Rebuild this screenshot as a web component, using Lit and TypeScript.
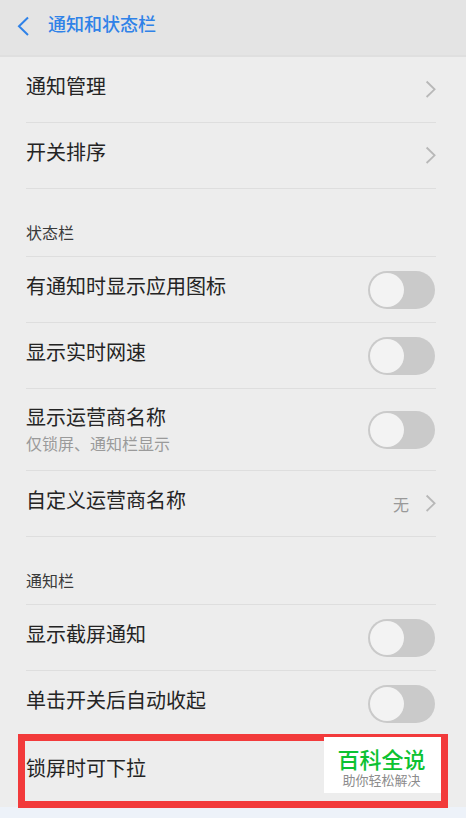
import { LitElement, html, css } from "lit";
import { customElement, property } from "lit/decorators.js";

@customElement("chevron-icon")
class ChevronIcon extends LitElement {
  static styles = css`
    :host {
      display: block;
      width: 12px;
      height: 20px;
    }
    .icon {
      display: block;
      fill: none;
      stroke: #b8b8b8;
      stroke-width: 1.8;
    }
  `;
  render() {
    return html`<svg class="icon" width="12" height="20" viewBox="0 0 12 20" aria-hidden="true">
      <path d="M2.6 1.5 10.6 9.3 2.6 17" />
    </svg>`;
  }
}

@customElement("link-row")
class LinkRow extends LitElement {
  @property() label = "";
  @property() value = "";

  static styles = css`
    :host {
      display: block;
    }
    .row {
      box-sizing: border-box;
      display: flex;
      align-items: center;
      min-height: 66px;
      border-bottom: 1px solid #dedede;
      color: #242424;
      text-decoration: none;
    }
    .label {
      flex: 1;
      padding-bottom: 8px;
      font-size: 20px;
      line-height: 28px;
    }
    .value {
      margin-right: 15px;
      font-size: 16px;
      line-height: 20px;
      color: #999;
    }
  `;
  render() {
    return html`<a class="row" href="#">
      <span class="label">${this.label}</span>
      ${this.value ? html`<span class="value">${this.value}</span>` : ""}
      <chevron-icon></chevron-icon>
    </a>`;
  }
}

@customElement("switch-row")
class SwitchRow extends LitElement {
  @property() label = "";
  @property() note = "";

  static styles = css`
    :host {
      display: block;
    }
    .row {
      box-sizing: border-box;
      display: flex;
      align-items: center;
      min-height: 66px;
      border-bottom: 1px solid #dedede;
      color: #242424;
    }
    .tall {
      min-height: 82px;
    }
    .text {
      flex: 1;
      padding-bottom: 8px;
      font-size: 20px;
      line-height: 28px;
    }
    .tall .text {
      padding-bottom: 2px;
    }
    .note {
      display: block;
      font-size: 16px;
      line-height: 24px;
      color: #9a9a9a;
    }
    .switch {
      appearance: none;
      box-sizing: border-box;
      display: flex;
      flex: none;
      width: 67px;
      height: 38px;
      margin: 0 1px 0 0;
      padding: 2px;
      border-radius: 19px;
      background: #cacaca;
    }
    .switch::before {
      content: "";
      width: 34px;
      height: 34px;
      border-radius: 50%;
      background: #f3f3f3;
    }
    .switch:checked {
      justify-content: flex-end;
      background: #1f7eea;
    }
  `;
  render() {
    return html`<label class="row ${this.note ? "tall" : ""}">
      <span class="text">
        ${this.label}${this.note ? html`<span class="note">${this.note}</span>` : ""}
      </span>
      <input class="switch" type="checkbox" role="switch" />
    </label>`;
  }
}

@customElement("app-root")
class AppRoot extends LitElement {
  static styles = css`
    :host {
      display: block;
      min-height: 100vh;
      background: #edf2f9;
      font-family: "Noto Sans CJK SC", sans-serif;
    }
    .screen {
      background: #ededed;
    }
    .header {
      box-sizing: border-box;
      display: flex;
      align-items: flex-start;
      gap: 16px;
      height: 57px;
      padding: 10px 16px 0;
      border-bottom: 2px solid #dfdfdf;
      background: #e4e4e4;
    }
    .back {
      margin: 6px 0 0;
      padding: 0;
      border: 0;
      background: none;
      cursor: pointer;
    }
    .back-icon {
      display: block;
      fill: none;
      stroke: #2f82e8;
      stroke-width: 2;
    }
    .title {
      margin: 0;
      font-size: 18px;
      font-weight: 500;
      line-height: 26px;
      color: #2f82e8;
    }
    .list {
      padding: 0 30px 0 26px;
    }
    .section {
      box-sizing: border-box;
      display: flex;
      align-items: flex-end;
      height: 68px;
      margin: 0;
      padding-bottom: 12px;
      border-bottom: 1px solid #dedede;
      font-size: 16px;
      font-weight: 400;
      line-height: 24px;
      color: #3a3a3a;
    }
    .last {
      position: relative;
      display: flex;
      align-items: center;
      height: 70px;
    }
    .last-label {
      padding-bottom: 8px;
      font-size: 20px;
      line-height: 28px;
      color: #242424;
    }
    .frame {
      position: absolute;
      inset: -3px -12px -1px -8px;
      border: 7px solid #f23a3b;
      pointer-events: none;
    }
    .badge {
      position: absolute;
      top: 0;
      right: -5px;
      box-sizing: border-box;
      width: 117px;
      height: 56px;
      padding: 8px 2px 0 0;
      background: #fff;
      text-align: center;
    }
    .badge-name {
      display: block;
      font-size: 22px;
      font-weight: 500;
      line-height: 26px;
      color: #0cc232;
    }
    .badge-note {
      display: block;
      font-size: 13px;
      line-height: 18px;
      color: #8c8c8c;
    }
  `;
  render() {
    return html`<div class="screen">
      <header class="header">
        <button class="back" aria-label="返回">
          <svg class="back-icon" width="16" height="20" viewBox="0 0 16 20">
            <path d="M12 1.5 3 10.3 12 19" />
          </svg>
        </button>
        <h1 class="title">通知和状态栏</h1>
      </header>
      <main class="list">
        <link-row label="通知管理"></link-row>
        <link-row label="开关排序"></link-row>
        <h2 class="section">状态栏</h2>
        <switch-row label="有通知时显示应用图标"></switch-row>
        <switch-row label="显示实时网速"></switch-row>
        <switch-row label="显示运营商名称" note="仅锁屏、通知栏显示"></switch-row>
        <link-row label="自定义运营商名称" value="无"></link-row>
        <h2 class="section">通知栏</h2>
        <switch-row label="显示截屏通知"></switch-row>
        <switch-row label="单击开关后自动收起"></switch-row>
        <div class="last">
          <span class="last-label">锁屏时可下拉</span>
          <div class="frame"></div>
          <div class="badge">
            <span class="badge-name">百科全说</span>
            <span class="badge-note">助你轻松解决</span>
          </div>
        </div>
      </main>
    </div>`;
  }
}
